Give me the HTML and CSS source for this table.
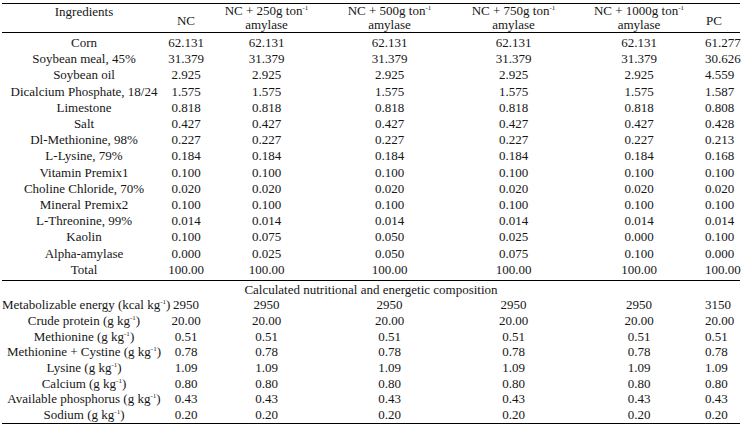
FILE: index.html
```html
<!DOCTYPE html>
<html>
<head>
<meta charset="utf-8">
<link rel="stylesheet" href="styles.css">
</head>
<body>
<table class="diet">
  <colgroup>
    <col class="c-name"><col class="c-nc"><col class="c-250"><col class="c-500"><col class="c-750"><col class="c-1000"><col class="c-pc">
  </colgroup>
  <thead>
    <tr>
      <th class="h-ing">Ingredients</th>
      <th class="h-mid">NC</th>
      <th>NC + 250g ton<sup>-1</sup><br>amylase</th>
      <th>NC + 500g ton<sup>-1</sup><br>amylase</th>
      <th>NC + 750g ton<sup>-1</sup><br>amylase</th>
      <th>NC + 1000g ton<sup>-1</sup><br>amylase</th>
      <th class="h-mid pc">PC</th>
    </tr>
  </thead>
  <tbody class="ing">
    <tr class="first"><td>Corn</td><td>62.131</td><td>62.131</td><td>62.131</td><td>62.131</td><td>62.131</td><td class="pc">61.277</td></tr>
    <tr><td>Soybean meal, 45%</td><td>31.379</td><td>31.379</td><td>31.379</td><td>31.379</td><td>31.379</td><td class="pc">30.626</td></tr>
    <tr><td>Soybean oil</td><td>2.925</td><td>2.925</td><td>2.925</td><td>2.925</td><td>2.925</td><td class="pc">4.559</td></tr>
    <tr><td>Dicalcium Phosphate, 18/24</td><td>1.575</td><td>1.575</td><td>1.575</td><td>1.575</td><td>1.575</td><td class="pc">1.587</td></tr>
    <tr><td>Limestone</td><td>0.818</td><td>0.818</td><td>0.818</td><td>0.818</td><td>0.818</td><td class="pc">0.808</td></tr>
    <tr><td>Salt</td><td>0.427</td><td>0.427</td><td>0.427</td><td>0.427</td><td>0.427</td><td class="pc">0.428</td></tr>
    <tr><td>Dl-Methionine, 98%</td><td>0.227</td><td>0.227</td><td>0.227</td><td>0.227</td><td>0.227</td><td class="pc">0.213</td></tr>
    <tr><td>L-Lysine, 79%</td><td>0.184</td><td>0.184</td><td>0.184</td><td>0.184</td><td>0.184</td><td class="pc">0.168</td></tr>
    <tr><td>Vitamin Premix1</td><td>0.100</td><td>0.100</td><td>0.100</td><td>0.100</td><td>0.100</td><td class="pc">0.100</td></tr>
    <tr><td>Choline Chloride, 70%</td><td>0.020</td><td>0.020</td><td>0.020</td><td>0.020</td><td>0.020</td><td class="pc">0.020</td></tr>
    <tr><td>Mineral Premix2</td><td>0.100</td><td>0.100</td><td>0.100</td><td>0.100</td><td>0.100</td><td class="pc">0.100</td></tr>
    <tr><td>L-Threonine, 99%</td><td>0.014</td><td>0.014</td><td>0.014</td><td>0.014</td><td>0.014</td><td class="pc">0.014</td></tr>
    <tr><td>Kaolin</td><td>0.100</td><td>0.075</td><td>0.050</td><td>0.025</td><td>0.000</td><td class="pc">0.100</td></tr>
    <tr><td>Alpha-amylase</td><td>0.000</td><td>0.025</td><td>0.050</td><td>0.075</td><td>0.100</td><td class="pc">0.000</td></tr>
    <tr class="total"><td>Total</td><td>100.00</td><td>100.00</td><td>100.00</td><td>100.00</td><td>100.00</td><td class="pc">100.00</td></tr>
  </tbody>
  <tbody class="nutr">
    <tr class="section"><td colspan="7">Calculated nutritional and energetic composition</td></tr>
    <tr><td>Metabolizable energy (kcal kg<sup>-1</sup>)</td><td>2950</td><td>2950</td><td>2950</td><td>2950</td><td>2950</td><td class="pc">3150</td></tr>
    <tr><td>Crude protein (g kg<sup>-1</sup>)</td><td>20.00</td><td>20.00</td><td>20.00</td><td>20.00</td><td>20.00</td><td class="pc">20.00</td></tr>
    <tr><td>Methionine (g kg<sup>-1</sup>)</td><td>0.51</td><td>0.51</td><td>0.51</td><td>0.51</td><td>0.51</td><td class="pc">0.51</td></tr>
    <tr><td>Methionine + Cystine (g kg<sup>-1</sup>)</td><td>0.78</td><td>0.78</td><td>0.78</td><td>0.78</td><td>0.78</td><td class="pc">0.78</td></tr>
    <tr><td>Lysine (g kg<sup>-1</sup>)</td><td>1.09</td><td>1.09</td><td>1.09</td><td>1.09</td><td>1.09</td><td class="pc">1.09</td></tr>
    <tr><td>Calcium (g kg<sup>-1</sup>)</td><td>0.80</td><td>0.80</td><td>0.80</td><td>0.80</td><td>0.80</td><td class="pc">0.80</td></tr>
    <tr><td>Available phosphorus (g kg<sup>-1</sup>)</td><td>0.43</td><td>0.43</td><td>0.43</td><td>0.43</td><td>0.43</td><td class="pc">0.43</td></tr>
    <tr class="last"><td>Sodium (g kg<sup>-1</sup>)</td><td>0.20</td><td>0.20</td><td>0.20</td><td>0.20</td><td>0.20</td><td class="pc">0.20</td></tr>
  </tbody>
</table>
</body>
</html>
```

FILE: styles.css
```css
html, body {
  margin: 0;
  padding: 0;
  background: #ffffff;
}

body {
  font-family: "Liberation Serif", "Times New Roman", serif;
  font-size: 13px;
  color: #161616;
}

.diet {
  margin: 3px 0 0 2px;
  width: 738px;
  border-collapse: collapse;
  table-layout: fixed;
  border-top: 1px solid #000;
  border-bottom: 1px solid #000;
}

.c-name { width: 164px; }
.c-nc { width: 40px; }
.c-250 { width: 121px; }
.c-500 { width: 125px; }
.c-750 { width: 123px; }
.c-1000 { width: 128px; }
.c-pc { width: 37px; }

.diet th,
.diet td {
  padding: 0;
  white-space: nowrap;
  text-align: center;
  font-weight: normal;
}

.diet th {
  height: 28px;
  line-height: 14px;
  vertical-align: top;
  border-bottom: 1px solid #000;
}

.diet th.h-ing {
  height: 27px;
  padding-top: 1px;
}

.diet th.h-mid {
  height: 18px;
  padding-top: 10px;
}

.diet .pc {
  text-align: left;
  padding-left: 2px;
}

.diet th.pc {
  padding-left: 3px;
}

sup {
  font-size: 7px;
  line-height: 0;
  vertical-align: 5px;
}

.ing td {
  height: 16.2px;
  line-height: 16px;
  vertical-align: middle;
}

.ing tr.first td {
  padding-top: 2px;
}

.ing tr.total td {
  padding-bottom: 2px;
  border-bottom: 1px solid #000;
}

.nutr td {
  height: 15.7px;
  line-height: 15px;
  vertical-align: middle;
}

.nutr tr.section td {
  height: 15px;
  padding-top: 1px;
  text-align: center;
}

.nutr tr.last td {
  padding-bottom: 1px;
}
```
